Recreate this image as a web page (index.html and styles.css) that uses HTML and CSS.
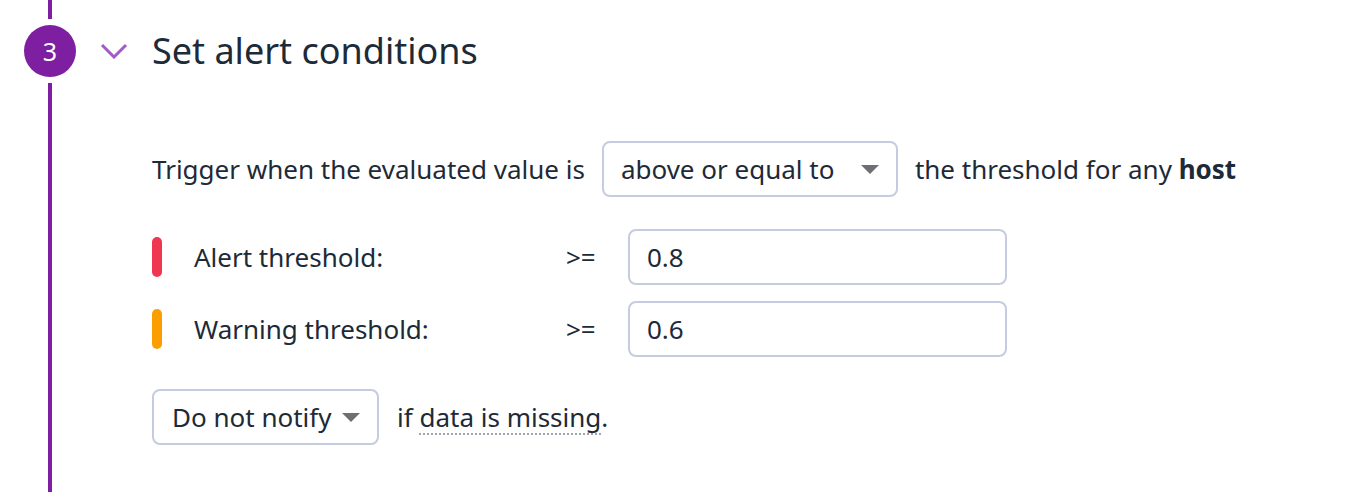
FILE: index.html
```html
<!DOCTYPE html>
<html>
<head>
<meta charset="utf-8">
<link rel="stylesheet" href="styles.css">
</head>
<body>
<div class="step">
  <div class="rail">
    <div class="rail-top"></div>
    <div class="num">3</div>
    <div class="rail-bottom"></div>
  </div>
  <div class="main">
    <div class="header">
      <svg class="chev" width="28" height="16" viewBox="0 0 28 16"><path d="M2 2 L14 14 L26 2" fill="none" stroke="#a35ac8" stroke-width="3"/></svg>
      <h2 class="title">Set alert conditions</h2>
    </div>
    <div class="form">
      <div class="row trigger">
        <span>Trigger when the evaluated value is</span>
        <div class="select sel-op"><span>above or equal to</span><span class="caret"></span></div>
        <span>the threshold for any <b>host</b></span>
      </div>
      <div class="row thr">
        <span class="bar red"></span>
        <span class="lbl">Alert threshold:</span>
        <span class="op">&gt;=</span>
        <div class="input">0.8</div>
      </div>
      <div class="row thr">
        <span class="bar orange"></span>
        <span class="lbl">Warning threshold:</span>
        <span class="op">&gt;=</span>
        <div class="input">0.6</div>
      </div>
      <div class="row missing">
        <div class="select sel-notify"><span>Do not notify</span><span class="caret"></span></div>
        <span>if <span class="dotted">data is missing</span>.</span>
      </div>
    </div>
  </div>
</div>
</body>
</html>
```
FILE: styles.css
```css
html, body {
  margin: 0;
  padding: 0;
  background: #ffffff;
}
body {
  font-family: "Noto Sans", "Open Sans", sans-serif;
  color: #1d2a37;
  width: 1348px;
  height: 492px;
  overflow: hidden;
}
.step {
  display: flex;
  height: 492px;
}
.rail {
  width: 100px;
  display: flex;
  flex-direction: column;
  align-items: center;
}
.rail-top {
  width: 4px;
  height: 19px;
  background: #7d1fa0;
  margin-bottom: 6px;
}
.rail-bottom {
  width: 4px;
  flex: 1;
  background: #7d1fa0;
  margin-top: 6px;
}
.num {
  width: 52px;
  height: 52px;
  border-radius: 50%;
  background: #7d1fa0;
  color: #fff;
  font-size: 25px;
  display: flex;
  align-items: center;
  justify-content: center;
}
.main {
  flex: 1;
}
.header {
  display: flex;
  align-items: center;
  height: 52px;
  margin-top: 25px;
}
.chev {
  margin-right: 24px;
}
.title {
  margin: 0;
  font-weight: 400;
  font-size: 36px;
  line-height: 52px;
}
.form {
  padding-left: 52px;
  padding-top: 64px;
  font-size: 26px;
}
.row {
  display: flex;
  align-items: center;
}
.trigger {
  gap: 17px;
}
.select {
  height: 56px;
  box-sizing: border-box;
  border: 2px solid #c5cce0;
  border-radius: 8px;
  display: flex;
  align-items: center;
  padding: 0 17px 0 17px;
}
.sel-op {
  width: 296px;
  justify-content: space-between;
}
.caret {
  width: 0;
  height: 0;
  border-left: 9px solid transparent;
  border-right: 9px solid transparent;
  border-top: 9px solid #6e6f74;
}
.thr {
  height: 56px;
  margin-top: 32px;
}
.thr + .thr {
  margin-top: 16px;
}
.bar {
  width: 10px;
  height: 40px;
  border-radius: 5px;
  margin-right: 32px;
}
.red { background: #ef3752; }
.orange { background: #fd9e00; }
.lbl {
  width: 372px;
}
.op {
  width: 62px;
}
.input {
  width: 379px;
  height: 56px;
  box-sizing: border-box;
  border: 2px solid #c5cce0;
  border-radius: 8px;
  padding-left: 17px;
  display: flex;
  align-items: center;
}
.missing {
  margin-top: 32px;
  gap: 18px;
}
.sel-notify {
  width: 227px;
  padding-left: 18px;
  justify-content: space-between;
}
.dotted {
  text-decoration: underline dotted #a0a4ad;
  text-decoration-thickness: 2px;
  text-underline-offset: 6px;
}
b {
  font-weight: 700;
}
```
